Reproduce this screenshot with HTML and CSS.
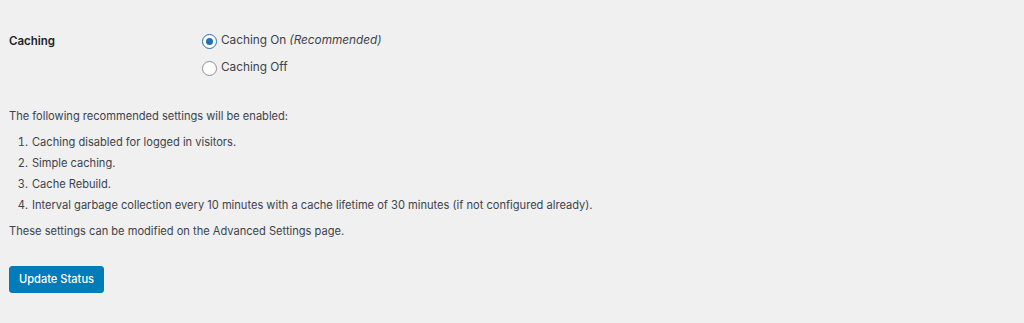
FILE: index.html
```html
<!DOCTYPE html>
<html lang="en">
<head>
    <meta charset="UTF-8">
    <meta name="viewport" content="width=device-width, initial-scale=1.0">
    <title>Caching</title>
    <link rel="stylesheet" href="styles.css">
</head>
<body>
    <form class="wrap">
        <div class="form-row">
            <div class="row-label">Caching</div>
            <div class="row-field">
                <label class="radio-line"><input type="radio" name="caching" checked> Caching On <em>(Recommended)</em></label>
                <label class="radio-line"><input type="radio" name="caching"> Caching Off</label>
            </div>
        </div>
        <p class="intro">The following recommended settings will be enabled:</p>
        <ol class="settings-list">
            <li>Caching disabled for logged in visitors.</li>
            <li>Simple caching.</li>
            <li>Cache Rebuild.</li>
            <li>Interval garbage collection every 10 minutes with a cache lifetime of 30 minutes (if not configured already).</li>
        </ol>
        <p class="note">These settings can be modified on the Advanced Settings page.</p>
        <button type="button" class="button-primary">Update Status</button>
    </form>
</body>
</html>
```

FILE: styles.css
```css
* { box-sizing: border-box; margin: 0; padding: 0; }
body { font-family: Inter, "Noto Sans", sans-serif; font-size: 11.1px; line-height: 1.5; background-color: #f0f0f1; color: #3c434a; }
.wrap { padding: 31px 9px 0 9px; }
.form-row { display: flex; }
.row-label { width: 193px; font-size: 11.5px; font-weight: 600; color: #1d2327; line-height: 20px; }
.row-field { display: flex; flex-direction: column; gap: 7px; }
.radio-line { display: flex; align-items: center; gap: 3px; height: 20px; font-size: 11.8px; }
.radio-line em { font-style: italic; }
.radio-line input {
    appearance: none; width: 15px; height: 15px; border: 1px solid #8c8f94; border-radius: 50%;
    background: #fff; display: inline-flex; align-items: center; justify-content: center; margin-right: 1px;
}
.radio-line input:checked { border-color: #2271b1; }
.radio-line input:checked::before { content: ""; width: 7px; height: 7px; border-radius: 50%; background: #2271b1; }
.intro { margin-top: 30px; }
.settings-list { margin: 7px 0 0 22px; padding-left: 0; }
.settings-list li { line-height: 21px; padding-left: 1px; }
.note { margin-top: 7px; }
.button-primary {
    display: block; margin-top: 27px; font-family: inherit; font-size: 11.1px; font-weight: 500; color: #fff; background: #007cba;
    border: 1px solid #007cba; border-radius: 3px; width: 95px; height: 27px; padding: 0; line-height: 25px; cursor: pointer;
}
```
